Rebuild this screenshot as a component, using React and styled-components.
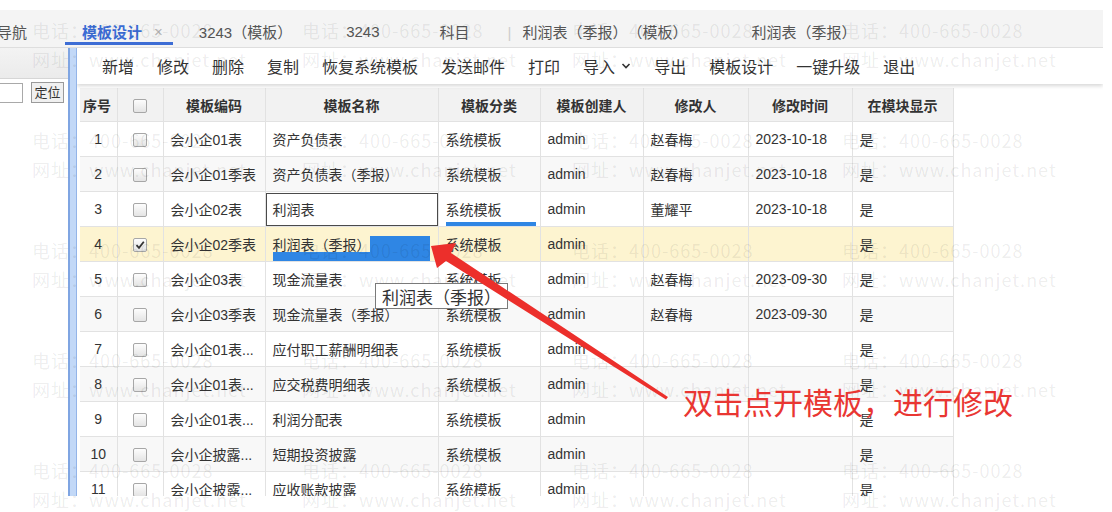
import React from "react";
import styled, { createGlobalStyle } from "styled-components";

const GlobalStyle = createGlobalStyle`
  body {
    margin: 0;
    background: #fff;
    font-family: "Liberation Sans", "Noto Sans CJK SC", sans-serif;
    color: #333;
    text-spacing-trim: space-all;
  }
`;

const Page = styled.div`
  position: relative;
  width: 1112px;
  height: 512px;
  overflow: hidden;
  padding-top: 10px;
  box-sizing: border-box;
`;

const TabBar = styled.div`
  display: flex;
  align-items: flex-start;
  width: 1103px;
  height: 38px;
  background: #f4f4f4;
  border-bottom: 1px solid #dedede;
  box-sizing: border-box;
`;

const Tab = styled.div`
  display: flex;
  align-items: center;
  height: 35px;
  box-sizing: border-box;
  padding: 10px ${(p) => p.$pr || 0}px 0 ${(p) => p.$pl || 0}px;
  margin-left: ${(p) => p.$ml || 0}px;
  font-size: 15px;
  white-space: nowrap;
  color: ${(p) => (p.$active ? "#3b6cd4" : "#555")};
  font-weight: ${(p) => (p.$active ? 700 : 400)};
  border-bottom: 3px solid ${(p) => (p.$active ? "#3d6dd5" : "transparent")};
`;

const TabClose = styled.span`
  margin-left: 12px;
  color: #b5b5b5;
  font-weight: 400;
  font-size: 15px;
`;

const TabSep = styled.span`
  margin-left: ${(p) => p.$ml || 0}px;
  color: #ccc;
  font-size: 15px;
  padding-top: 10px;
  height: 25px;
  display: flex;
  align-items: center;
`;

const Body = styled.div`
  display: flex;
  height: 448px;
`;

const LeftPanel = styled.div`
  width: 68px;
  flex-shrink: 0;
`;

const LeftHead = styled.div`
  height: 30px;
  background: linear-gradient(#f3f3f3, #ebebeb);
  border-bottom: 1px solid #d6d6d6;
`;

const Locator = styled.div`
  display: flex;
  align-items: center;
  gap: 8px;
  margin-top: 3px;
`;

const LocInput = styled.div`
  width: 22px;
  height: 18px;
  background: #fff;
  border: 1px solid #a9a9a9;
  border-left: none;
`;

const LocButton = styled.div`
  width: 31px;
  height: 19px;
  border: 1px solid #9a9a9a;
  background: #f0f0f0;
  font-size: 13px;
  line-height: 19px;
  text-align: center;
  color: #333;
`;

const Splitter = styled.div`
  width: 6px;
  flex-shrink: 0;
  background: #c2d8f7;
  border-left: 2px solid #7fa5e2;
  border-right: 1px solid #93b4e8;
`;

const Main = styled.div`
  width: 1026px;
  display: flex;
  flex-direction: column;
  overflow: hidden;
`;

const Toolbar = styled.div`
  position: relative;
  z-index: 1;
  display: flex;
  align-items: center;
  gap: 23px;
  height: 36px;
  padding-left: 25px;
  background: #fff;
  box-shadow: 0 2px 4px rgba(0, 0, 0, 0.16);
  font-size: 16px;
  color: #333;
  flex-shrink: 0;
`;

const ToolItem = styled.span`
  display: flex;
  align-items: center;
  gap: 6px;
  white-space: nowrap;
`;

const TableWrap = styled.div`
  margin: 4px 0 0 3px;
`;

const Table = styled.table`
  border-collapse: collapse;
  table-layout: fixed;
  width: 873px;
  font-size: 14px;
`;

const Th = styled.th`
  height: 33px;
  padding: 0 ${(p) => (p.$left ? 3 : 4)}px;
  background: #f2f2f2;
  border-right: 1px solid #e2e2e2;
  border-bottom: 1px solid #e2e2e2;
  font-weight: 700;
  color: #333;
  text-align: ${(p) => (p.$left ? "left" : "center")};
  white-space: nowrap;
`;

const Tr = styled.tr`
  background: ${(p) => (p.$hl ? "#fdf4d0" : p.$odd ? "#fff" : "#f8f8f8")};
`;

const Td = styled.td`
  position: relative;
  height: 34px;
  padding: ${(p) => (p.$flush ? "0" : "0 7px")};
  border-right: 1px solid #e2e2e2;
  border-bottom: 1px solid #e2e2e2;
  text-align: ${(p) => (p.$center ? "center" : "left")};
  white-space: nowrap;
  overflow: hidden;
  color: #333;
`;

const Box = styled.span`
  display: inline-block;
  vertical-align: middle;
  width: 12px;
  height: 12px;
  border: 1px solid #a7a7a7;
  border-radius: 2px;
  background: linear-gradient(#fdfdfd, #e4e4e4);
  position: relative;
`;

const EditBox = styled.div`
  height: 33px;
  box-sizing: border-box;
  border: 1px solid #4a4a4a;
  background: #fff;
  padding-left: 6px;
  display: flex;
  align-items: center;
`;

const Mark = styled.span`
  position: absolute;
  background: #2f86e4;
`;

const Watermark = styled.div`
  position: absolute;
  inset: 0;
  pointer-events: none;
  display: grid;
  grid-template-columns: repeat(4, 270px);
  grid-auto-rows: 110px;
  padding: 16px 0 0 32px;
  font-family: "Noto Sans CJK SC", sans-serif;
  font-size: 18px;
  line-height: 29px;
  letter-spacing: 1px;
  color: rgba(0, 0, 0, 0.08);
  white-space: nowrap;
  z-index: 5;
`;

const Tooltip = styled.div`
  position: absolute;
  left: 375px;
  top: 283px;
  height: 26px;
  box-sizing: border-box;
  padding: 0 6px;
  display: flex;
  align-items: center;
  background: #fff;
  border: 1px solid #7a7a7a;
  font-family: "Noto Sans CJK SC", sans-serif;
  font-size: 17px;
  color: #333;
  z-index: 6;
`;

const Overlay = styled.svg`
  position: absolute;
  left: 0;
  top: 0;
  z-index: 7;
`;

const Annotation = styled.div`
  position: absolute;
  left: 683px;
  top: 379px;
  font-family: "Noto Sans CJK SC", sans-serif;
  font-size: 30px;
  color: #e93632;
  white-space: nowrap;
  z-index: 7;
`;

function Checkbox({ checked }) {
  return (
    <Box>
      {checked && (
        <svg width="12" height="12" viewBox="0 0 12 12" style={{ position: "absolute", left: 0, top: 0 }}>
          <path d="M2.5 6.2 L5 8.8 L9.8 2.8" fill="none" stroke="#333" strokeWidth="1.8" />
        </svg>
      )}
    </Box>
  );
}

const tools = ["新增", "修改", "删除", "复制", "恢复系统模板", "发送邮件", "打印", "导入", "导出", "模板设计", "一键升级", "退出"];

const rows = [
  ["会小企01表", "资产负债表", "赵春梅", "2023-10-18"],
  ["会小企01季表", "资产负债表（季报）", "赵春梅", "2023-10-18"],
  ["会小企02表", "利润表", "董耀平", "2023-10-18"],
  ["会小企02季表", "利润表（季报）", "", ""],
  ["会小企03表", "现金流量表", "赵春梅", "2023-09-30"],
  ["会小企03季表", "现金流量表（季报）", "赵春梅", "2023-09-30"],
  ["会小企01表...", "应付职工薪酬明细表", "", ""],
  ["会小企01表...", "应交税费明细表", "", ""],
  ["会小企01表...", "利润分配表", "", ""],
  ["会小企披露...", "短期投资披露", "", ""],
  ["会小企披露...", "应收账款披露", "", ""],
];

const colWidths = [37, 46, 102, 173, 102, 103, 105, 104, 101];

function NameCell({ index, name }) {
  if (index === 2) {
    return (
      <Td $flush>
        <EditBox>{name}</EditBox>
      </Td>
    );
  }
  if (index === 3) {
    return (
      <Td>
        {name}
        <Mark style={{ left: 104, top: 9, width: 60, height: 16 }} />
        <Mark style={{ left: 7, top: 25, width: 157, height: 9 }} />
      </Td>
    );
  }
  return <Td>{name}</Td>;
}

export default function App() {
  return (
    <>
      <GlobalStyle />
      <Page>
        <TabBar>
          <Tab $ml={-3}>导航</Tab>
          <Tab $ml={38} $pl={17} $pr={10} $active>
            模板设计<TabClose>×</TabClose>
          </Tab>
          <Tab $ml={26}>3243（模板）</Tab>
          <Tab $ml={54}>3243</Tab>
          <Tab $ml={60}>科目</Tab>
          <TabSep $ml={38}>|</TabSep>
          <Tab $ml={11}>利润表（季报）（模板）</Tab>
          <Tab $ml={64}>利润表（季报）</Tab>
        </TabBar>
        <Body>
          <LeftPanel>
            <LeftHead />
            <Locator>
              <LocInput />
              <LocButton>定位</LocButton>
            </Locator>
          </LeftPanel>
          <Splitter />
          <Main>
            <Toolbar>
              {tools.map((t) => (
                <ToolItem key={t}>
                  {t}
                  {t === "导入" && (
                    <svg width="10" height="6" viewBox="0 0 10 6">
                      <path d="M1.5 1 L5 4.5 L8.5 1" fill="none" stroke="#333" strokeWidth="1.6" />
                    </svg>
                  )}
                </ToolItem>
              ))}
            </Toolbar>
            <TableWrap>
              <Table>
                <colgroup>
                  {colWidths.map((w, i) => (
                    <col key={i} style={{ width: w }} />
                  ))}
                </colgroup>
                <thead>
                  <tr>
                    <Th $left>序号</Th>
                    <Th>
                      <Checkbox />
                    </Th>
                    <Th>模板编码</Th>
                    <Th>模板名称</Th>
                    <Th>模板分类</Th>
                    <Th>模板创建人</Th>
                    <Th>修改人</Th>
                    <Th>修改时间</Th>
                    <Th>在模块显示</Th>
                  </tr>
                </thead>
                <tbody>
                  {rows.map((r, i) => (
                    <Tr key={i} $odd={i % 2 === 0} $hl={i === 3}>
                      <Td $center>{i + 1}</Td>
                      <Td $center>
                        <Checkbox checked={i === 3} />
                      </Td>
                      <Td>{r[0]}</Td>
                      <NameCell index={i} name={r[1]} />
                      <Td>
                        系统模板
                        {i === 2 && <Mark style={{ left: 7, bottom: 0, width: 90, height: 4 }} />}
                      </Td>
                      <Td>admin</Td>
                      <Td>{r[2]}</Td>
                      <Td>{r[3]}</Td>
                      <Td>是</Td>
                    </Tr>
                  ))}
                </tbody>
              </Table>
            </TableWrap>
          </Main>
        </Body>
        <Watermark>
          {Array.from({ length: 20 }).map((_, i) => (
            <div key={i}>
              电话：400-665-0028
              <br />
              网址：www.chanjet.net
            </div>
          ))}
        </Watermark>
        <Tooltip>利润表（季报）</Tooltip>
        <Overlay width="1112" height="512" viewBox="0 0 1112 512">
          <polygon
            points="431,246 456,243 451,253 668,397 666,399.5 446,261 437,268"
            fill="#ec2f2b"
          />
        </Overlay>
        <Annotation>双击点开模板，进行修改</Annotation>
      </Page>
    </>
  );
}
